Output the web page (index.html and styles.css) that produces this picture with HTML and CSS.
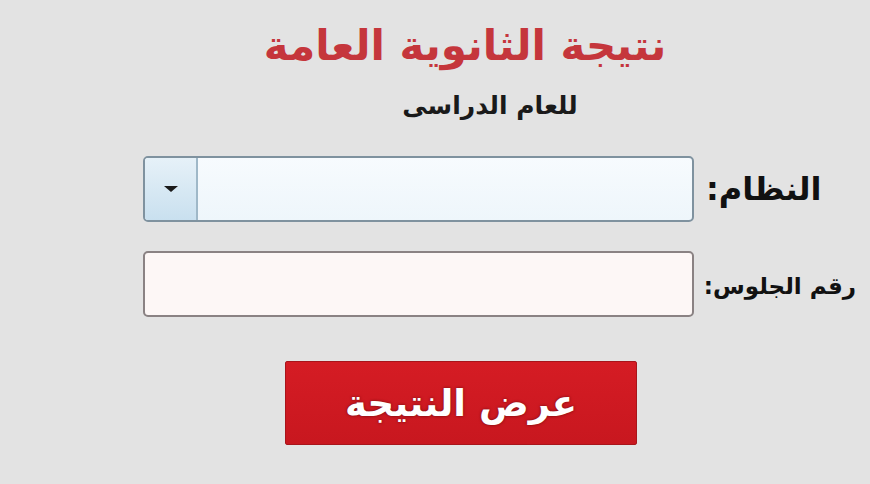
FILE: index.html
```html
<!DOCTYPE html>
<html lang="ar" dir="rtl">
<head>
<meta charset="utf-8">
<title>نتيجة الثانوية العامة</title>
<link rel="stylesheet" href="styles.css">
</head>
<body>
<div class="page">
  <header class="head">
    <h1 class="title">نتيجة الثانوية العامة</h1>
    <p class="sub">للعام الدراسى</p>
  </header>
  <form class="form">
    <div class="row">
      <label class="lbl lbl-big">النظام:</label>
      <div class="select">
        <div class="select-val"></div>
        <div class="select-btn"><span class="arrow"></span></div>
      </div>
    </div>
    <div class="row">
      <label class="lbl lbl-small">رقم الجلوس:</label>
      <div class="input"></div>
    </div>
    <div class="actions">
      <button type="button" class="btn">عرض النتيجة</button>
    </div>
  </form>
</div>
</body>
</html>
```
FILE: styles.css
```css
html, body {
  margin: 0;
  padding: 0;
  background: #e3e3e3;
  font-family: "DejaVu Sans", "Liberation Sans", sans-serif;
}
.page {
  width: 870px;
  height: 484px;
  overflow: hidden;
}
.head {
  padding-left: 60px;
  text-align: center;
}
.title {
  margin: 0;
  padding-top: 17px;
  font-size: 42px;
  line-height: 58px;
  font-weight: bold;
  color: #c5363c;
}
.sub {
  margin: 16px 0 0;
  padding-left: 50px;
  font-size: 25px;
  line-height: 30px;
  font-weight: bold;
  color: #1a1a1a;
}
.form {
  padding-right: 14px;
  margin-top: 35px;
}
.row {
  display: grid;
  grid-template-columns: 150px 551px;
  column-gap: 12px;
  align-items: center;
  margin-bottom: 29px;
}
.lbl {
  text-align: left;
  font-weight: bold;
  color: #111;
  white-space: nowrap;
}
.lbl-big { font-size: 32px; }
.lbl-small { font-size: 23px; padding-top: 4px; }
.select {
  height: 66px;
  box-sizing: border-box;
  border: 2px solid #7f929f;
  border-radius: 5px;
  display: flex;
  overflow: hidden;
  background: linear-gradient(#f7fbfe, #eef6fb);
}
.select-val { flex: 1; }
.select-btn {
  width: 51px;
  border-right: 2px solid #9fb8c8;
  background: linear-gradient(#e6f1f8, #c9e0ef);
  display: flex;
  align-items: center;
  justify-content: center;
}
.arrow {
  width: 0;
  height: 0;
  border-left: 7px solid transparent;
  border-right: 7px solid transparent;
  border-top: 6px solid #1a1a1a;
}
.input {
  height: 66px;
  box-sizing: border-box;
  border: 2px solid #8a8283;
  border-radius: 5px;
  background: #fdf7f6;
}
.actions {
  display: flex;
  justify-content: center;
  padding-left: 50px;
  margin-top: 44px;
}
.btn {
  width: 352px;
  height: 84px;
  border: 1px solid #a8151b;
  border-radius: 2px;
  background: linear-gradient(#d51c24, #c8171f);
  color: #fff;
  font-family: "DejaVu Sans", sans-serif;
  font-size: 37px;
  font-weight: bold;
  text-shadow: 0 0 3px #6a0a0e;
  margin-right: -16px;
}
```
